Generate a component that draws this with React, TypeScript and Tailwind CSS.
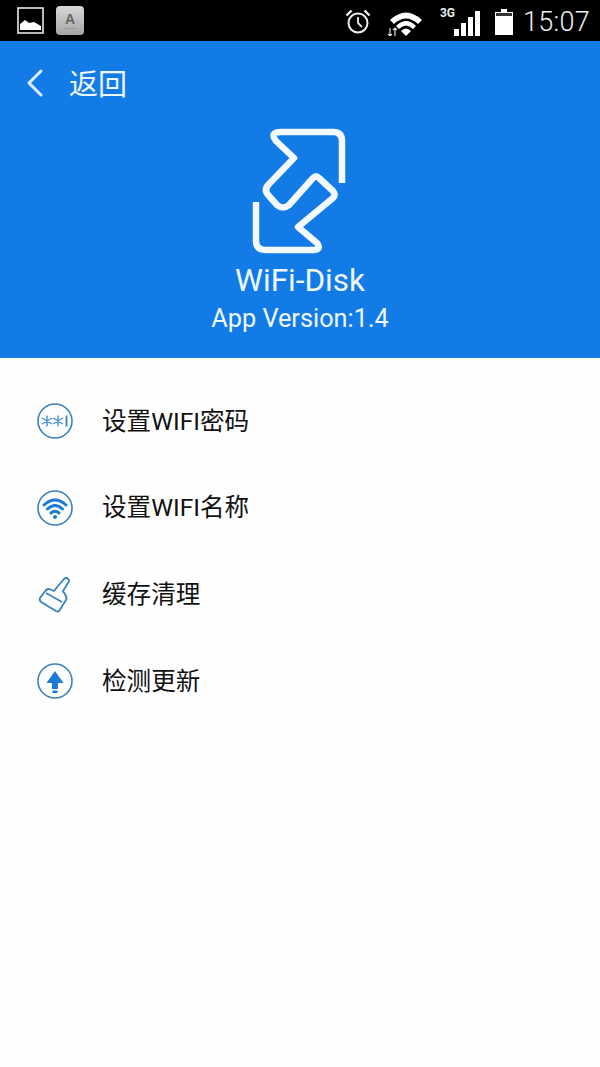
import type { ReactNode } from 'react';

const CJK = 'font-["Roboto","Noto_Sans_CJK_SC",sans-serif]';

function StatusBar() {
  return (
    <div className="h-[41px] bg-black flex items-center pl-[17px] pr-[10px] shrink-0">
      <svg width="27" height="27" viewBox="0 0 27 27" className="mr-[12px]">
        <rect x="1" y="1" width="25" height="25" fill="none" stroke="#e8e8e8" strokeWidth="1.6" />
        <path d="M3 23V17L8 13L12 16L17 15L24 19V23Z" fill="#fff" />
      </svg>
      <div className="w-[28px] h-[29px] rounded-[4px] bg-gradient-to-b from-[#d8d8d8] to-[#a5a5a5] flex flex-col items-center justify-center">
        <span className="text-[14px] leading-[14px] font-bold text-[#666] font-['Liberation_Sans',sans-serif]">A</span>
        <span className="w-[12px] h-px bg-[#999] mt-[2px]" />
      </div>
      <div className="flex-1" />
      <svg width="28" height="28" viewBox="0 0 28 28" className="mr-[15px] mt-[2px]" fill="none" stroke="#eee">
        <circle cx="14" cy="15" r="9.5" strokeWidth="2" />
        <path d="M14 9V15L18 19" strokeWidth="1.8" />
        <path d="M2.5 7.5L7.5 2.5M25.5 7.5L20.5 2.5" strokeWidth="2.4" />
      </svg>
      <svg width="36" height="28" viewBox="0 0 36 28" className="mr-[27px] mt-[2px]">
        <path d="M3 12Q19 -3 35 12L31 16Q19 5 7 16Z" fill="#fff" />
        <path d="M9 18Q19 8 29 18L26 21Q19 14 12 21Z" fill="#fff" />
        <path d="M14 23Q19 18 24 23L19 28Z" fill="#fff" />
        <path d="M3 20V28M1 26L3 28L5 26M8 28V20M6 22L8 20L10 22" stroke="#ddd" strokeWidth="1.2" fill="none" />
      </svg>
      <div className="relative w-[30px] h-[28px] mr-[15px] mt-[2px]">
        <span className="absolute left-[-10px] top-[-1px] text-[12px] leading-[12px] font-bold text-[#eee] font-['Roboto',sans-serif]">3G</span>
        <div className="absolute right-0 bottom-0 flex items-end gap-[2px]">
          <span className="w-[5px] h-[7px] bg-white" />
          <span className="w-[5px] h-[13px] bg-white" />
          <span className="w-[5px] h-[19px] bg-white" />
          <span className="w-[5px] h-[25px] bg-white" />
        </div>
      </div>
      <svg width="18" height="26" viewBox="0 0 18 26" className="mr-[10px] mt-[2px]">
        <path d="M6 0H12V3H18V26H0V3H6Z" fill="#fff" />
        <rect x="1" y="4" width="16" height="3" fill="#333" />
      </svg>
      <span className="text-[27px] leading-none font-light text-[#eee] font-['Roboto',sans-serif] tracking-[0.3px] mt-[3px]">15:07</span>
    </div>
  );
}

function DiskLogo() {
  return (
    <svg width="104" height="130" viewBox="250 125 104 130" fill="none" stroke="#f3f9fe" strokeWidth="6.5" strokeLinejoin="round">
      <path d="M344 183V141Q344 132 335 132H283Q271 132 278 141L296 158L271 184Q265 190 271 196L279 205Q285 210 291 205L315 178Q318 175 321 178L335 191Q338 195 335 198L300 227L319 243Q324 250 315 250H268Q258 250 258 241V202" />
    </svg>
  );
}

function Row({ icon, label }: { icon: ReactNode; label: string }) {
  return (
    <div className={`h-[86.6px] flex items-center pl-[36px] ${CJK}`}>
      <div className="w-[38px] flex justify-center">{icon}</div>
      <span className="ml-[28px] text-[24.6px] text-[#111] relative top-px">{label}</span>
    </div>
  );
}

function PasswordIcon() {
  return (
    <svg width="38" height="38" viewBox="0 0 38 38" fill="none">
      <circle cx="19" cy="19" r="17" stroke="#3a82ba" strokeWidth="1.6" />
      <path d="M11 13.500V24.500M6 16L16 22M16 16L6 22M22 13.500V24.500M17 16L27 22M27 16L17 22" stroke="#4a90d0" strokeWidth="1.4" />
      <path d="M30.500 13.500V24.500" stroke="#3a82ba" strokeWidth="1.8" />
    </svg>
  );
}

function WifiIcon() {
  return (
    <svg width="38" height="38" viewBox="0 0 38 38" fill="none">
      <circle cx="19" cy="19" r="17" stroke="#3a82ba" strokeWidth="1.6" />
      <path d="M8 16Q19 6 30 16M11.500 20Q19 13 26.500 20M15 24Q19 20.500 23 24" stroke="#1a7ad8" strokeWidth="3" strokeLinecap="round" />
      <circle cx="19" cy="28" r="2" fill="#1a7ad8" />
    </svg>
  );
}

function BrushIcon() {
  return (
    <svg width="34" height="40" viewBox="0 0 34 40" fill="none" stroke="#3a82ba" strokeWidth="1.8" strokeLinejoin="round">
      <path d="M20 12L26 5Q28 3 30 5Q32 7 30 9L25 17L28 22Q29 24 28 26L21 37Q20 38 18 37L3 28Q1 26 2 24L8 16Q9 15 11 15L16 17Z" />
      <path d="M8 19L24 28" />
    </svg>
  );
}

function UpdateIcon() {
  return (
    <svg width="38" height="38" viewBox="0 0 38 38" fill="none">
      <circle cx="19" cy="19" r="17" stroke="#3a82ba" strokeWidth="1.6" />
      <path d="M19 9L27.500 21H22V27H16V21H10.500Z" fill="#1a7ad8" />
      <path d="M16.500 28.500H21.500V31H16.500Z" fill="#1a7ad8" />
    </svg>
  );
}

export default function App() {
  return (
    <div className="w-[600px] h-[1067px] bg-[#fefefe] flex flex-col overflow-hidden">
      <StatusBar />

      {/* Blue header */}
      <div className={`h-[317px] bg-[#127be6] flex flex-col text-[#f0f7fe] ${CJK}`}>
        <div className="h-[84px] flex items-center pl-[26px]">
          <svg width="18" height="28" viewBox="0 0 18 28" fill="none" stroke="#dcedfc" strokeWidth="3" strokeLinecap="round" strokeLinejoin="round">
            <path d="M15 2L3 14L15 26" />
          </svg>
          <span className="ml-[25px] text-[29px] relative top-[3px]">返回</span>
        </div>
        <div className="flex flex-col items-center">
          <DiskLogo />
          <span className="mt-[8px] text-[31.500px] leading-[36px]">WiFi-Disk</span>
          <span className="mt-[5px] text-[25.300px] leading-[30px]">App Version:1.4</span>
        </div>
      </div>

      {/* Settings list */}
      <div className="pt-[20px]">
        <Row icon={<PasswordIcon />} label="设置WIFI密码" />
        <Row icon={<WifiIcon />} label="设置WIFI名称" />
        <Row icon={<BrushIcon />} label="缓存清理" />
        <Row icon={<UpdateIcon />} label="检测更新" />
      </div>
    </div>
  );
}
